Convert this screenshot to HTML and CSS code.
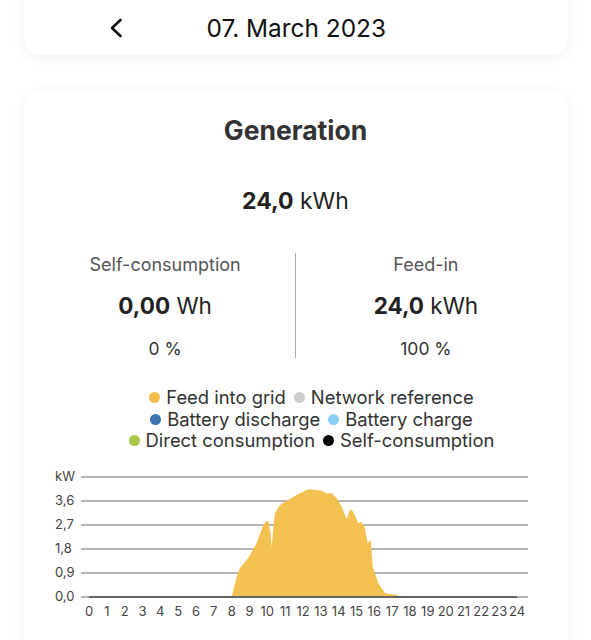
FILE: index.html
```html
<!DOCTYPE html>
<html lang="en">
<head>
<meta charset="utf-8">
<title>Generation</title>
<link rel="stylesheet" href="styles.css">
</head>
<body>
<div class="page">
  <header class="card date-card">
    <button class="back" aria-label="Back">
      <svg width="16" height="20" viewBox="0 0 16 20"><path d="M12.5 2 L4 10 L12.5 18" fill="none" stroke="#111" stroke-width="2.6" stroke-linecap="round" stroke-linejoin="round"/></svg>
    </button>
    <div class="date">07. March 2023</div>
  </header>

  <section class="card gen-card">
    <h1 class="title">Generation</h1>
    <div class="total"><b>24,0</b> kWh</div>

    <div class="split">
      <div class="col">
        <div class="label">Self-consumption</div>
        <div class="value"><b>0,00</b> Wh</div>
        <div class="pct">0 %</div>
      </div>
      <div class="divider"></div>
      <div class="col">
        <div class="label">Feed-in</div>
        <div class="value"><b>24,0</b> kWh</div>
        <div class="pct">100 %</div>
      </div>
    </div>

    <div class="legend">
      <div class="legend-row">
        <span class="item"><i class="dot yellow"></i>Feed into grid</span>
        <span class="item"><i class="dot grey"></i>Network reference</span>
      </div>
      <div class="legend-row">
        <span class="item"><i class="dot blue"></i>Battery discharge</span>
        <span class="item"><i class="dot lightblue"></i>Battery charge</span>
      </div>
      <div class="legend-row">
        <span class="item"><i class="dot green"></i>Direct consumption</span>
        <span class="item"><i class="dot black"></i>Self-consumption</span>
      </div>
    </div>

    <svg class="chart" width="544" height="165" viewBox="0 0 544 165">
      <g class="grid" stroke="#9a9a9a" stroke-width="1.5">
        <line x1="57" y1="12" x2="504" y2="12"/>
        <line x1="57" y1="36" x2="504" y2="36"/>
        <line x1="57" y1="60" x2="504" y2="60"/>
        <line x1="57" y1="84" x2="504" y2="84"/>
        <line x1="57" y1="108" x2="504" y2="108"/>
        <line x1="57" y1="132" x2="504" y2="132"/>
      </g>
      <path fill="#F3C14F" d="M207.7,132 L212.7,111.7 L216,103 L224.3,93 L232.7,78 L238.7,61.7 L242,56 L244.7,56.7 L247,71.7 L247.7,82 L249.3,61.7 L251,48 L256,40 L261,36.7 L272.7,30 L282.7,25 L286,24.3 L297.7,25.7 L302.7,28.3 L307.7,28.3 L312.7,33.3 L317.7,41.7 L322.7,54.3 L326,44.3 L329.3,46.7 L334.3,58.3 L337.7,56.7 L341,63.3 L343.7,78.3 L346.7,74.3 L348.7,101.7 L354.3,118.3 L361,128.3 L372.7,130 L377.7,132 Z"/>
      <line x1="65" y1="132" x2="493" y2="132" stroke="#666" stroke-width="2"/>
      <g class="ylabels">
        <text x="31" y="16">kW</text>
        <text x="31" y="40">3,6</text>
        <text x="31" y="64">2,7</text>
        <text x="31" y="88">1,8</text>
        <text x="31" y="112">0,9</text>
        <text x="31" y="136">0,0</text>
      </g>
      <g class="xlabels" text-anchor="middle">
        <text x="65" y="151">0</text>
        <text x="82.8" y="151">1</text>
        <text x="100.7" y="151">2</text>
        <text x="118.5" y="151">3</text>
        <text x="136.3" y="151">4</text>
        <text x="154.2" y="151">5</text>
        <text x="172" y="151">6</text>
        <text x="189.8" y="151">7</text>
        <text x="207.7" y="151">8</text>
        <text x="225.5" y="151">9</text>
        <text x="243.3" y="151">10</text>
        <text x="261.2" y="151">11</text>
        <text x="279" y="151">12</text>
        <text x="296.8" y="151">13</text>
        <text x="314.7" y="151">14</text>
        <text x="332.5" y="151">15</text>
        <text x="350.3" y="151">16</text>
        <text x="368.2" y="151">17</text>
        <text x="386" y="151">18</text>
        <text x="403.8" y="151">19</text>
        <text x="421.7" y="151">20</text>
        <text x="439.5" y="151">21</text>
        <text x="457.3" y="151">22</text>
        <text x="475.2" y="151">23</text>
        <text x="493" y="151">24</text>
      </g>
    </svg>
  </section>
</div>
</body>
</html>
```

FILE: styles.css
```css
html, body {
  margin: 0;
  padding: 0;
  background: #ffffff;
}
body {
  font-family: Inter, "Noto Sans", "Liberation Sans", sans-serif;
  color: #222;
  overflow: hidden;
}
.page {
  width: 591px;
  display: flex;
  flex-direction: column;
  align-items: center;
}
.card {
  width: 544px;
  background: #fff;
  border-radius: 16px;
  box-shadow: 0 2px 14px rgba(0, 0, 0, 0.07);
  box-sizing: border-box;
}
.date-card {
  margin-top: -20px;
  height: 75px;
  padding-top: 20px;
  display: flex;
  align-items: center;
}
.back {
  margin-left: 82px;
  width: 20px;
  height: 24px;
  border: 0;
  background: none;
  padding: 0;
  display: flex;
  align-items: center;
  justify-content: center;
}
.date {
  margin-left: 81px;
  font-size: 24.4px;
  color: #111;
}
.gen-card {
  margin-top: 36px;
  height: 600px;
  padding-top: 24px;
  display: flex;
  flex-direction: column;
  align-items: center;
}
.title {
  margin: 0;
  font-size: 26.5px;
  font-weight: 700;
  color: #333;
  line-height: 30px;
}
.total {
  margin-top: 42px;
  font-size: 23px;
  line-height: 28px;
  color: #222;
}
.total b, .value b {
  font-weight: 700;
}
.split {
  margin-top: 39px;
  width: 100%;
  padding: 0 12px;
  box-sizing: border-box;
  display: flex;
  align-items: flex-start;
}
.col {
  flex: 1;
  display: flex;
  flex-direction: column;
  align-items: center;
}
.divider {
  width: 1.5px;
  background: #aaa;
  margin-top: -1px;
  height: 105px;
}
.label {
  font-size: 18px;
  line-height: 22px;
  color: #555;
}
.value {
  margin-top: 16px;
  font-size: 22.5px;
  line-height: 28px;
  color: #222;
}
.pct {
  margin-top: 18px;
  font-size: 17.5px;
  line-height: 22px;
  color: #333;
}
.legend {
  margin-top: 27px;
  padding-left: 32px;
  display: flex;
  flex-direction: column;
  align-items: center;
  font-size: 18.4px;
  line-height: 21.5px;
  color: #333;
}
.legend-row {
  display: flex;
  gap: 8px;
}
.item {
  display: flex;
  align-items: center;
  gap: 6px;
}
.dot {
  width: 11px;
  height: 11px;
  border-radius: 50%;
  display: inline-block;
}
.yellow { background: #F4BE4F; }
.grey { background: #CDCDCD; }
.blue { background: #3A74AE; }
.lightblue { background: #89CFF5; }
.green { background: #A8C64A; }
.black { background: #000; }
.chart {
  margin-top: 13px;
  display: block;
  flex-shrink: 0;
}
.chart text {
  font-family: Inter, "Noto Sans", "Liberation Sans", sans-serif;
  font-size: 13px;
  fill: #444;
}
```
